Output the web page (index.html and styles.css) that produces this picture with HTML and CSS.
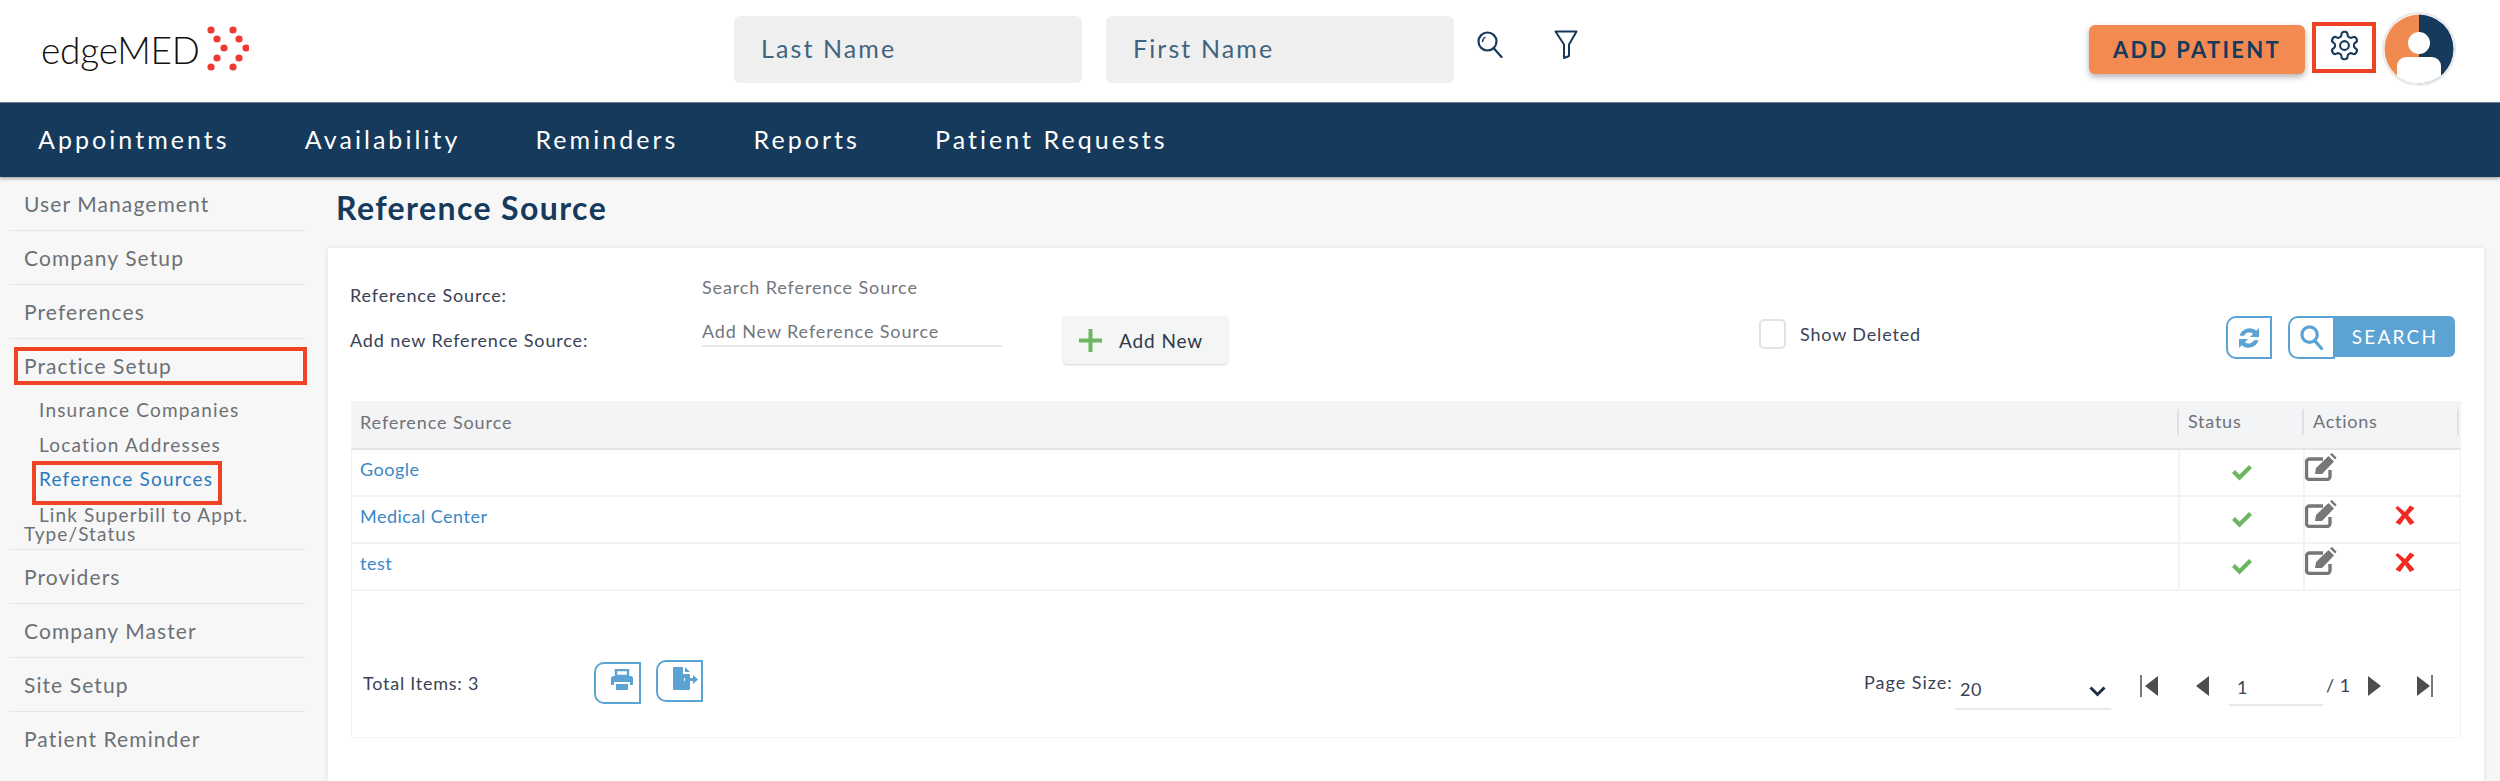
FILE: index.html
```html
<!DOCTYPE html>
<html lang="en">
<head>
<meta charset="utf-8">
<title>Reference Source</title>
<link rel="stylesheet" href="styles.css">
</head>
<body>
<header class="topbar">
  <div class="logo">
    <span class="logo-text">edgeMED</span>
    <svg class="logo-dots" viewBox="0 0 44 54" width="44" height="54">
      <g fill="#ee3a33">
        <circle cx="6" cy="7" r="3.6"/><circle cx="28" cy="7" r="3.6"/>
        <circle cx="12" cy="16" r="3.6"/><circle cx="34" cy="16" r="3.6"/>
        <circle cx="19" cy="25" r="3.6"/><circle cx="41" cy="25" r="3.6"/>
        <circle cx="12" cy="35" r="3.6"/><circle cx="34" cy="35" r="3.6"/>
        <circle cx="6" cy="44" r="3.6"/><circle cx="28" cy="44" r="3.6"/>
      </g>
    </svg>
  </div>
  <div class="patient-search">
    <input class="name-input" placeholder="Last Name">
    <input class="name-input" placeholder="First Name">
    <svg class="top-icon top-search" viewBox="0 0 26 27" width="26" height="27" fill="none" stroke="#153a5b" stroke-width="2.2">
      <circle cx="10.5" cy="10.5" r="9"/><path d="M17 17.5l7.5 8.5" stroke-linecap="round"/><path d="M5.5 11a5.5 5.5 0 0 1 3-5" stroke-width="1.4"/>
    </svg>
    <svg class="top-icon top-filter" viewBox="0 0 24 29" width="24" height="29" fill="none" stroke="#153a5b" stroke-width="2" stroke-linejoin="round">
      <path d="M1.500 1.500h21L15 14.500V26l-5 2V14.500z"/>
    </svg>
  </div>
  <div class="top-actions">
    <button class="add-patient">ADD PATIENT</button>
    <div class="gear-box">
      <svg viewBox="0 0 24 24" width="33" height="33" fill="none" stroke="#153a5b" stroke-width="1.5" stroke-linecap="round" stroke-linejoin="round">
        <path d="M12.22 2h-.44a2 2 0 0 0-2 2v.18a2 2 0 0 1-1 1.73l-.43.25a2 2 0 0 1-2 0l-.15-.08a2 2 0 0 0-2.73.73l-.22.38a2 2 0 0 0 .73 2.73l.15.1a2 2 0 0 1 1 1.72v.51a2 2 0 0 1-1 1.74l-.15.09a2 2 0 0 0-.73 2.73l.22.38a2 2 0 0 0 2.73.73l.15-.08a2 2 0 0 1 2 0l.43.25a2 2 0 0 1 1 1.73V20a2 2 0 0 0 2 2h.44a2 2 0 0 0 2-2v-.18a2 2 0 0 1 1-1.73l.43-.25a2 2 0 0 1 2 0l.15.08a2 2 0 0 0 2.73-.73l.22-.39a2 2 0 0 0-.73-2.73l-.15-.08a2 2 0 0 1-1-1.74v-.5a2 2 0 0 1 1-1.74l.15-.09a2 2 0 0 0 .73-2.73l-.22-.38a2 2 0 0 0-2.73-.73l-.15.08a2 2 0 0 1-2 0l-.43-.25a2 2 0 0 1-1-1.73V4a2 2 0 0 0-2-2z"/>
        <circle cx="12" cy="12" r="3.2"/>
      </svg>
    </div>
    <svg class="avatar" viewBox="0 0 74 74" width="74" height="74">
      <defs><clipPath id="avatar-clip"><circle cx="37" cy="37" r="34.5"/></clipPath></defs>
      <circle cx="37" cy="37" r="36" fill="#fff" stroke="#e9e9e9" stroke-width="2"/>
      <g clip-path="url(#avatar-clip)">
        <rect x="0" y="0" width="37" height="74" fill="#f18a51"/>
        <rect x="37" y="0" width="37" height="74" fill="#153a5b"/>
        <circle cx="37" cy="31" r="11" fill="#fff"/>
        <rect x="15" y="45" width="44" height="40" rx="9" fill="#fff"/>
      </g>
    </svg>
  </div>
</header>

<nav class="mainnav">
  <a>Appointments</a>
  <a>Availability</a>
  <a>Reminders</a>
  <a>Reports</a>
  <a>Patient Requests</a>
</nav>

<div class="page">
  <aside class="sidebar">
    <div class="side-item">User Management</div>
    <div class="side-item">Company Setup</div>
    <div class="side-item">Preferences</div>
    <div class="side-group">
      <div class="side-head">Practice Setup<span class="mark mark-head"></span></div>
      <div class="sub-item">Insurance Companies</div>
      <div class="sub-item">Location Addresses</div>
      <div class="sub-item sub-active">Reference Sources<span class="mark mark-sub"></span></div>
      <div class="sub-wrap">Link Superbill to Appt. Type/Status</div>
    </div>
    <div class="side-item">Providers</div>
    <div class="side-item">Company Master</div>
    <div class="side-item">Site Setup</div>
    <div class="side-item side-last">Patient Reminder</div>
  </aside>

  <main class="content">
    <h1 class="title">Reference Source</h1>
    <section class="card">
      <div class="form">
        <div class="labels">
          <div class="label">Reference Source:</div>
          <div class="label label-second">Add new Reference Source:</div>
        </div>
        <div class="fields">
          <input class="field" placeholder="Search Reference Source">
          <input class="field field-line" placeholder="Add New Reference Source">
        </div>
        <button class="add-new">
          <svg viewBox="0 0 23 23" width="23" height="23"><path d="M9.500 0h4v9.500H23v4h-9.500V23h-4v-9.500H0v-4h9.500z" fill="#6db561"/></svg>
          <span>Add New</span>
        </button>
        <label class="show-deleted"><span class="checkbox"></span>Show Deleted</label>
        <div class="search-tools">
          <button class="tool-btn">
            <svg viewBox="0 0 24 24" width="24" height="26" fill="#5ba3d3"><path d="M22 2v9h-9l3.200-3.200A6 6 0 0 0 7 9.800H2.500A10.500 10.500 0 0 1 19.300 4.700z"/><path d="M2 22v-9h9l-3.200 3.200A6 6 0 0 0 17 14.200h4.500A10.500 10.500 0 0 1 4.700 19.300z"/></svg>
          </button>
          <div class="search-group">
            <button class="tool-btn tool-round">
              <svg viewBox="0 0 24 26" width="23" height="25" fill="none" stroke="#5ba3d3" stroke-width="3.400"><circle cx="10" cy="10" r="8"/><path d="M15.500 16.500l7 8" stroke-linecap="round"/></svg>
            </button>
            <button class="search-btn">SEARCH</button>
          </div>
        </div>
      </div>

      <div class="grid-box">
        <div class="row row-head">
          <div class="cell-name">Reference Source</div>
          <div class="cell-head">Status</div>
          <div class="cell-head cell-head-end">Actions</div>
        </div>
        <div class="row">
          <a class="cell-name link">Google</a>
          <div class="cell-status"><svg class="check" viewBox="0 0 22 17" width="22" height="17"><path d="M1 9l3-3 4.500 4.500L18 1l3 3L8.500 16.500z" fill="#6db561"/></svg></div>
          <div class="cell-actions">
            <svg class="edit" viewBox="0 0 32 28" width="32" height="28"><path d="M25 17v6.500a3 3 0 0 1-3 3H4.500a3 3 0 0 1-3-3V9a3 3 0 0 1 3-3H18" fill="none" stroke="#777" stroke-width="3.400"/><path d="M10 21l1-6L23.500 3l5.500 5.500L17 21z" fill="#777"/><path d="M25 1.500l1-1a1 1 0 0 1 1.500 0l3.500 3.500a1 1 0 0 1 0 1.500l-1 1z" fill="#777"/></svg>
          </div>
        </div>
        <div class="row">
          <a class="cell-name link">Medical Center</a>
          <div class="cell-status"><svg class="check" viewBox="0 0 22 17" width="22" height="17"><path d="M1 9l3-3 4.500 4.500L18 1l3 3L8.500 16.500z" fill="#6db561"/></svg></div>
          <div class="cell-actions">
            <svg class="edit" viewBox="0 0 32 28" width="32" height="28"><path d="M25 17v6.500a3 3 0 0 1-3 3H4.500a3 3 0 0 1-3-3V9a3 3 0 0 1 3-3H18" fill="none" stroke="#777" stroke-width="3.400"/><path d="M10 21l1-6L23.500 3l5.500 5.500L17 21z" fill="#777"/><path d="M25 1.500l1-1a1 1 0 0 1 1.500 0l3.500 3.500a1 1 0 0 1 0 1.500l-1 1z" fill="#777"/></svg>
            <svg class="remove" viewBox="0 0 20 20" width="20" height="20"><path d="M2.500 1L10 7 15 .500 19.500 3 13 10l6.500 7.500-4.500 2.500L10 13l-5 7-4.500-2.500L7 10 .500 3z" fill="#ef2b22"/></svg>
          </div>
        </div>
        <div class="row">
          <a class="cell-name link">test</a>
          <div class="cell-status"><svg class="check" viewBox="0 0 22 17" width="22" height="17"><path d="M1 9l3-3 4.500 4.500L18 1l3 3L8.500 16.500z" fill="#6db561"/></svg></div>
          <div class="cell-actions">
            <svg class="edit" viewBox="0 0 32 28" width="32" height="28"><path d="M25 17v6.500a3 3 0 0 1-3 3H4.500a3 3 0 0 1-3-3V9a3 3 0 0 1 3-3H18" fill="none" stroke="#777" stroke-width="3.400"/><path d="M10 21l1-6L23.500 3l5.500 5.500L17 21z" fill="#777"/><path d="M25 1.500l1-1a1 1 0 0 1 1.500 0l3.500 3.500a1 1 0 0 1 0 1.500l-1 1z" fill="#777"/></svg>
            <svg class="remove" viewBox="0 0 20 20" width="20" height="20"><path d="M2.500 1L10 7 15 .500 19.500 3 13 10l6.500 7.500-4.500 2.500L10 13l-5 7-4.500-2.500L7 10 .500 3z" fill="#ef2b22"/></svg>
          </div>
        </div>
        <div class="grid-footer">
          <div class="total">Total Items: 3</div>
          <button class="foot-btn foot-print">
            <svg viewBox="0 0 22 22" width="22" height="22" fill="#5ba3d3"><path d="M5 1h12v6H5z" fill="none" stroke="#5ba3d3" stroke-width="2.400"/><path d="M2.500 7h17A2.500 2.500 0 0 1 22 9.500V16h-3v-3H3v3H0V9.500A2.500 2.500 0 0 1 2.500 7z"/><path d="M5 15h12v6H5z"/></svg>
          </button>
          <button class="foot-btn foot-export">
            <svg viewBox="0 0 26 23" width="26" height="23" fill="#5ba3d3"><path d="M0 1a1 1 0 0 1 1-1h9v7h7v4h-6v3h6v8a1 1 0 0 1-1 1H1a1 1 0 0 1-1-1z"/><path d="M12 0l5 5h-5z"/><path d="M12 11h8V8l5 4.500-5 4.500v-3h-8z"/></svg>
          </button>
          <div class="pager">
            <span class="page-size">Page Size:</span>
            <div class="size-select"><span>20</span>
              <svg viewBox="0 0 17 11" width="17" height="11"><path d="M1.500 1.500L8.500 8.500 15.500 1.500" fill="none" stroke="#1f2d45" stroke-width="3"/></svg>
            </div>
            <svg class="pg pg-first" viewBox="0 0 18 22" width="18" height="22"><path d="M1 0v22" stroke="#4d4d4d" stroke-width="1.500"/><path d="M18 1v20L5 11z" fill="#4d4d4d"/></svg>
            <svg class="pg pg-prev" viewBox="0 0 13 22" width="13" height="22"><path d="M13 1v20L0 11z" fill="#4d4d4d"/></svg>
            <div class="page-input">1</div>
            <span class="page-total">/ 1</span>
            <svg class="pg pg-next" viewBox="0 0 13 22" width="13" height="22"><path d="M0 1v20l13-10z" fill="#4d4d4d"/></svg>
            <svg class="pg pg-last" viewBox="0 0 16 22" width="16" height="22"><path d="M0 1v20l13-10z" fill="#4d4d4d"/><path d="M15 0v22" stroke="#4d4d4d" stroke-width="1.500"/></svg>
          </div>
        </div>
      </div>
    </section>
  </main>
</div>
</body>
</html>
```
FILE: styles.css
```css
* { box-sizing: border-box; }
html, body { margin: 0; height: 781px; overflow: hidden; }
body { font-family: Lato, "Open Sans", sans-serif; background: #f7f7f7; color: #3a4256; font-size: 18px; }
button { font-family: inherit; border: 0; padding: 0; }
input { font-family: inherit; outline: 0; }

/* Top bar */
.topbar { height: 102px; background: #fff; display: flex; align-items: center; padding: 0 44px 4px 41px; }
.logo { width: 208px; height: 54px; display: flex; align-items: center; }
.logo-text { font-size: 37px; font-weight: 300; letter-spacing: -.2px; color: #111; line-height: 44px; margin-top: 2px; }
.logo-dots { margin-left: auto; margin-top: 1px; flex: none; }
.patient-search { display: flex; align-items: center; margin-left: 485px; }
.name-input { width: 348px; height: 67px; border: 0; background: #efefef; border-radius: 6px; padding: 0 27px 2px; font-size: 25px; letter-spacing: 2.1px; color: #3f6480; margin-right: 24px; }
.name-input::placeholder { color: #3f6480; opacity: 1; }
.top-icon { flex: none; margin-bottom: 9px; }
.top-search { margin-left: -1px; }
.top-filter { margin-left: 51px; }
.top-actions { display: flex; align-items: center; margin-left: auto; }
.add-patient { width: 216px; height: 49px; border-radius: 6px; background: #f38a51; color: #153a5b; font-weight: 700; font-size: 22px; letter-spacing: 2.3px; box-shadow: 0 3px 6px rgba(0,0,0,.3); }
.gear-box { width: 64px; height: 51px; border: 4px solid #ee4423; margin-left: 7px; margin-bottom: 4px; display: flex; align-items: center; justify-content: center; }
.gear-box svg { margin-bottom: 4px; }
.avatar { margin-left: 6px; flex: none; }

/* Main navigation */
.mainnav { height: 75px; background: #153a5b; display: flex; align-items: center; padding-left: 38px; gap: 75px; border-top: 1px solid #6a8092; box-shadow: 0 2px 3px rgba(0,0,0,.3); position: relative; }
.mainnav a { color: #fff; font-size: 25px; letter-spacing: 3.05px; line-height: 30px; margin-bottom: 3px; }

/* Page */
.page { display: flex; height: 604px; }
.sidebar { width: 328px; flex: none; padding-left: 9px; }
.side-item { width: 296px; height: 54px; padding: 12px 0 0 15px; line-height: 30px; border-bottom: 1px solid #e6e6e6; font-size: 21px; letter-spacing: 1.1px; color: #6c7176; }
.side-last { border-bottom: 0; }
.side-group { width: 296px; height: 211px; border-bottom: 1px solid #e6e6e6; font-size: 21px; color: #6c7176; }
.side-head { height: 54px; padding: 12px 0 0 15px; line-height: 30px; letter-spacing: 1.1px; position: relative; }
.sub-item { height: 34.5px; line-height: 34.5px; padding-left: 30px; font-size: 19px; letter-spacing: 1.2px; position: relative; }
.sub-active { color: #2a7ac0; }
.sub-wrap { width: 270px; margin: 8px 0 0 15px; text-indent: 15px; font-size: 19px; line-height: 19px; letter-spacing: 1.1px; }
.mark { position: absolute; border: 4px solid #ee4423; pointer-events: none; }
.mark-head { left: 5px; top: 8px; width: 293px; height: 38px; }
.mark-sub { left: 23px; top: -1px; width: 190px; height: 44px; }

.content { flex: 1; padding-right: 16px; min-width: 0; }
.title { margin: 0; height: 71px; padding: 11px 0 0 8px; font-size: 32px; line-height: 40px; font-weight: 700; color: #153a5b; letter-spacing: 1.4px; }
.card { background: #fff; height: 533px; box-shadow: 0 0 6px rgba(0,0,0,.1); padding-left: 23px; }

/* Form */
.form { height: 153px; display: flex; align-items: flex-start; padding-right: 29px; }
.labels { width: 351px; flex: none; padding-top: 35px; }
.label { line-height: 24px; color: #3a4256; letter-spacing: .85px; margin-left: -1px; }
.label-second { margin-top: 21px; }
.fields { width: 300px; flex: none; padding-top: 27px; display: flex; flex-direction: column; }
.field { width: 300px; height: 24px; border: 0; padding: 0; background: transparent; font-size: 18px; letter-spacing: .88px; }
.field::placeholder { color: #73767c; opacity: 1; }
.field-line { height: 27px; margin-top: 21px; padding-bottom: 3px; border-bottom: 2px solid #e6e7e9; }
.add-new { width: 165px; height: 48px; margin: 68px 0 0 61px; flex: none; background: #f4f5f5; border-radius: 4px; box-shadow: 0 1px 2px rgba(0,0,0,.18); display: flex; align-items: center; padding-left: 16px; gap: 17px; font-size: 19px; letter-spacing: .9px; color: #2f3848; }
.show-deleted { margin: 71px 0 0 531px; display: flex; align-items: center; gap: 14px; line-height: 30px; letter-spacing: .85px; color: #3a4256; }
.checkbox { width: 27px; height: 30px; border: 2px solid #e3e3e3; border-radius: 5px; background: #fff; }
.search-tools { margin: 68px 0 0 auto; display: flex; gap: 16px; }
.tool-btn { width: 46px; height: 43px; background: #fff; border: 2px solid #5ba3d3; border-radius: 10px 0 0 10px; display: flex; align-items: center; justify-content: center; }
.search-group { display: flex; align-items: flex-start; }
.tool-round { width: 47px; }
.search-btn { width: 120px; height: 41px; background: #5ba3d3; color: #fff; font-size: 19px; letter-spacing: 2.2px; border-radius: 0 6px 6px 0; }

/* Grid */
.grid-box { width: 2110px; height: 337px; border: 1px solid #f2f3f5; border-top: 0; }
.row { display: grid; grid-template-columns: 1826px 125px 1fr; height: 47px; border-bottom: 2px solid #f2f3f5; }
.row-head { height: 49px; background: #f3f4f6; border-bottom: 2px solid #e4e5e8; margin-left: -1px; margin-right: -1px; align-items: center; }
.cell-name { padding-left: 9px; line-height: 38px; letter-spacing: .5px; color: #6f7277; }
.row-head .cell-name { line-height: 38px; letter-spacing: .9px; margin-top: -5px; }
.link { color: #3a87c8; padding-left: 8px; }
.cell-head { height: 26px; margin-top: -5px; padding-left: 9px; border-left: 2px solid #dfe0e3; line-height: 24px; letter-spacing: .75px; color: #6f7277; }
.cell-head-end { border-right: 2px solid #dfe0e3; margin-right: 2px; }
.cell-status, .cell-actions { border-left: 2px solid #f2f3f5; display: flex; align-items: flex-start; }
.cell-status { padding-left: 51px; }
.check { margin-top: 14px; }
.edit { margin-top: 3px; flex: none; }
.remove { margin: 8px 0 0 58px; flex: none; }

/* Grid footer */
.grid-footer { height: 147px; display: flex; align-items: center; padding: 41px 0 0 11px; }
.total { width: 231px; letter-spacing: .75px; color: #3a4256; margin-top: -5px; }
.foot-btn { width: 47px; height: 42px; background: #fff; border: 2px solid #5ba3d3; border-radius: 10px 0 0 10px; display: flex; align-items: center; justify-content: center; flex: none; }
.foot-btn svg { margin: 0 0 6px 8px; }
.foot-export svg { margin: 0 0 4px 12px; }
.foot-print { margin-top: -4px; }
.foot-export { margin: -9px 0 0 15px; }
.pager { margin-left: auto; margin-right: 27px; display: flex; align-items: center; }
.page-size { letter-spacing: 1px; margin-bottom: 6px; width: 90px; color: #3a4256; white-space: nowrap; margin-left: -1px; }
.size-select { width: 156px; height: 36px; margin-top: 14px; margin-left: 1px; display: flex; justify-content: space-between; align-items: center; padding: 0 5px 5px; border-bottom: 2px solid #e9e9ea; color: #3a4256; letter-spacing: .5px; }
.size-select svg { margin-top: 5px; }
.pg { flex: none; margin-top: 1px; }
.pg-first { margin-left: 29px; }
.pg-prev { margin-left: 38px; }
.page-input { width: 94px; height: 34px; margin: 7px 0 0 20px; padding-left: 8px; line-height: 30px; border-bottom: 2px solid #e9e9ea; }
.page-total { margin-left: 3px; width: 22px; letter-spacing: .5px; white-space: nowrap; }
.pg-next { margin-left: 20px; }
.pg-last { margin-left: 36px; }
```
